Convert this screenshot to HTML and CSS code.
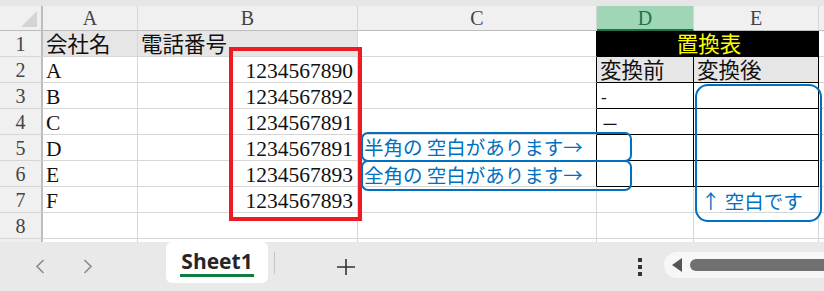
FILE: index.html
```html
<!DOCTYPE html>
<html lang="ja">

<head>
    <meta charset="UTF-8">
    <title>置換表</title>
    <link rel="stylesheet" href="styles.css">
</head>

<body>
    <div class="app">
        <div class="topbar"></div>
        <div class="sheet">
            <div class="grid">
                <div class="corner"><span class="tri"></span></div>
                <div class="ch">A</div>
                <div class="ch">B</div>
                <div class="ch">C</div>
                <div class="ch sel">D</div>
                <div class="ch">E</div>
                <div class="ch"></div>

                <div class="rh">1</div>
                <div class="c fill">会社名</div>
                <div class="c fill">電話番号</div>
                <div class="c kr"></div>
                <div class="c title">置換表</div>
                <div class="c"></div>

                <div class="rh">2</div>
                <div class="c">A</div>
                <div class="c num">1234567890</div>
                <div class="c kr"></div>
                <div class="c fill kb">変換前</div>
                <div class="c fill kb">変換後</div>
                <div class="c"></div>

                <div class="rh">3</div>
                <div class="c">B</div>
                <div class="c num">1234567892</div>
                <div class="c kr"></div>
                <div class="c kb"><span class="dash">-</span></div>
                <div class="c kb"></div>
                <div class="c"></div>

                <div class="rh">4</div>
                <div class="c">C</div>
                <div class="c num">1234567891</div>
                <div class="c kr"></div>
                <div class="c kb"><span class="dash wide">－</span></div>
                <div class="c kb"></div>
                <div class="c"></div>

                <div class="rh">5</div>
                <div class="c">D</div>
                <div class="c num">1234567891</div>
                <div class="c kr"></div>
                <div class="c kb"></div>
                <div class="c kb"></div>
                <div class="c"></div>

                <div class="rh">6</div>
                <div class="c">E</div>
                <div class="c num">1234567893</div>
                <div class="c kr"></div>
                <div class="c kb"></div>
                <div class="c kb"></div>
                <div class="c"></div>

                <div class="rh">7</div>
                <div class="c">F</div>
                <div class="c num">1234567893</div>
                <div class="c"></div>
                <div class="c"></div>
                <div class="c"></div>
                <div class="c"></div>

                <div class="rh">8</div>
                <div class="c"></div>
                <div class="c"></div>
                <div class="c"></div>
                <div class="c"></div>
                <div class="c"></div>
                <div class="c"></div>

                <div class="rh"></div>
                <div class="c"></div>
                <div class="c"></div>
                <div class="c"></div>
                <div class="c"></div>
                <div class="c"></div>
                <div class="c"></div>
            </div>

            <!-- 図形 -->
            <div class="redbox"></div>
            <div class="note note_half">半角の 空白があります→</div>
            <div class="note note_full">全角の 空白があります→</div>
            <div class="note note_col">↑ 空白です</div>
        </div>

        <div class="footer">
            <div class="nav">
                <svg width="10" height="15" viewBox="0 0 10 15"><path d="M8.5 1 L2 7.5 L8.5 14" fill="none" stroke="#8a8a8a" stroke-width="1.6"/></svg>
                <svg width="10" height="15" viewBox="0 0 10 15"><path d="M1.5 1 L8 7.5 L1.5 14" fill="none" stroke="#8a8a8a" stroke-width="1.6"/></svg>
            </div>
            <div class="tab"><span>Sheet1</span></div>
            <div class="sep"></div>
            <div class="add">
                <svg width="18" height="16" viewBox="0 0 18 16"><path d="M9 0 V16 M0 8 H18" stroke="#333" stroke-width="1.6"/></svg>
            </div>
            <div class="dots"><i></i><i></i><i></i></div>
            <div class="scroll">
                <span class="arrow"></span>
                <span class="thumb"></span>
            </div>
        </div>
    </div>
</body>

</html>
```

FILE: styles.css
```css
* {
    margin: 0;
    padding: 0;
    box-sizing: border-box;
}

body {
    width: 824px;
    height: 291px;
    overflow: hidden;
    background: #fff;
    font-family: "Liberation Serif", "Noto Sans CJK JP", serif;
}

.app {
    width: 824px;
    height: 291px;
    display: flex;
    flex-direction: column;
}

.topbar {
    height: 6px;
    background: #e6e6e6;
}

.sheet {
    position: relative;
    height: 236px;
    overflow: hidden;
}

.grid {
    display: grid;
    grid-template-columns: 43px 95px 220px 239px 97px 125px 40px;
    grid-template-rows: 25px repeat(9, 26px);
}

.grid > div {
    border-right: 1px solid #d6d6d6;
    border-bottom: 1px solid #d6d6d6;
    white-space: nowrap;
    overflow: visible;
}

.corner {
    position: relative;
    background: #f0f0f0;
    border-right: 2px solid #bdbdbd !important;
    border-bottom: 1px solid #bdbdbd !important;
}

.tri {
    position: absolute;
    right: 4px;
    bottom: 3px;
    width: 0;
    height: 0;
    border-left: 16px solid transparent;
    border-bottom: 16px solid #d4d4d4;
}

.ch {
    background: #f0f0f0;
    color: #444;
    font-size: 20px;
    line-height: 25px;
    text-align: center;
    border-bottom: 1px solid #bdbdbd !important;
}

.ch.sel {
    background: #a0d6b8;
    color: #217346;
    border-bottom: 2px solid #217346 !important;
}

.rh {
    background: #f0f0f0;
    color: #444;
    font-size: 20px;
    line-height: 27px;
    text-align: center;
    border-right: 2px solid #bdbdbd !important;
}

.c {
    font-size: 21.5px;
    line-height: 28px;
    padding-left: 3px;
    color: #111;
}

.fill {
    background: #e7e6e6;
}

.num {
    text-align: right;
    padding-right: 4px;
}

.kr {
    border-right-color: #000 !important;
}

.kb {
    border-right-color: #000 !important;
    border-bottom-color: #000 !important;
}

.title {
    grid-column: span 2;
    background: #000;
    color: #ffff00;
    text-align: center;
    border-right-color: #000 !important;
    border-bottom-color: #000 !important;
}

.dash {
    display: inline-block;
    font-size: 17px;
    margin: 1px 0 0 1px;
    vertical-align: top;
}

.dash.wide {
    font-size: 18px;
    margin: 2px 0 0 1px;
}

.redbox {
    position: absolute;
    left: 229px;
    top: 41px;
    width: 133px;
    height: 174px;
    border: 4px solid #ed1c24;
}

.note {
    position: absolute;
    border: 2px solid #0070c0;
    color: #0070c0;
    font-family: "Noto Sans CJK JP", sans-serif;
    font-size: 19.5px;
    white-space: nowrap;
}

.note_half {
    left: 361px;
    top: 126px;
    width: 271px;
    height: 30px;
    border-radius: 7px;
    line-height: 25px;
    padding-left: 1px;
}

.note_full {
    left: 361px;
    top: 154px;
    width: 271px;
    height: 31px;
    border-radius: 7px;
    line-height: 26px;
    padding-left: 1px;
}

.note_col {
    left: 695px;
    top: 78px;
    width: 127px;
    height: 138px;
    border-radius: 13px;
    padding: 102px 0 0 4px;
    line-height: 26px;
}

.footer {
    height: 49px;
    background: #e9e9e9;
    display: flex;
    align-items: flex-start;
}

.nav {
    width: 166px;
    height: 100%;
    display: flex;
    align-items: center;
    padding-left: 35px;
    gap: 38px;
}

.tab {
    width: 102px;
    height: 41px;
    background: #fff;
    border-radius: 6px;
    display: flex;
    justify-content: center;
    padding-top: 6px;
}

.tab span {
    font-family: "Open Sans", sans-serif;
    font-weight: bold;
    font-size: 21px;
    line-height: 26px;
    color: #262626;
    height: 29px;
    border-bottom: 3px solid #107c41;
    padding: 0 1px;
}

.sep {
    width: 1px;
    height: 22px;
    margin: 10px 0 0 6px;
    background: #c4c4c4;
}

.add {
    width: 143px;
    height: 100%;
    display: flex;
    align-items: center;
    padding-left: 62px;
}

.dots {
    width: 4px;
    margin: 16px 0 0 220px;
    display: flex;
    flex-direction: column;
    gap: 3px;
}

.dots i {
    width: 4px;
    height: 4px;
    background: #333;
}

.scroll {
    margin: 10px 0 0 22px;
    flex: 1;
    height: 26px;
    background: #f7f7f7;
    border-radius: 13px 0 0 13px;
    display: flex;
    align-items: center;
    padding-left: 8px;
}

.arrow {
    width: 0;
    height: 0;
    border-top: 7px solid transparent;
    border-bottom: 7px solid transparent;
    border-right: 10px solid #555;
}

.thumb {
    flex: 1;
    height: 12px;
    margin-left: 8px;
    background: #707070;
    border-radius: 6px 0 0 6px;
}
```
